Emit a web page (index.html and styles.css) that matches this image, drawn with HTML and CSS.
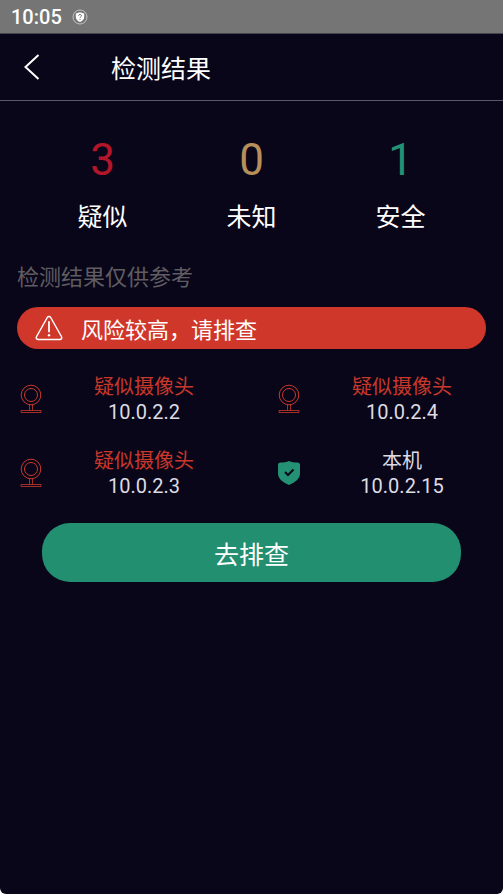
FILE: index.html
```html
<!DOCTYPE html>
<html lang="zh-CN">
<head>
  <meta charset="utf-8">
  <meta name="viewport" content="width=device-width, initial-scale=1">
  <title>检测结果</title>
  <link rel="stylesheet" href="styles.css">
</head>
<body>
  <svg class="sprite" aria-hidden="true">
    <symbol id="camera" viewBox="0 0 28 32">
      <g fill="none" stroke="currentColor">
        <circle cx="14" cy="12" r="9.800"/>
        <circle cx="14" cy="12" r="6.500"/>
        <path d="M12.500 22v5.500M15.500 22v5.500M4 27.500h20v2H4z" stroke-width=".8"/>
      </g>
    </symbol>
  </svg>
  <div class="screen">
    <div class="status">
      <span>10:05</span>
      <svg class="status-icon" viewBox="0 0 16 16" aria-hidden="true">
        <circle cx="8" cy="8" r="7" fill="none" stroke="#c4c4c4"/>
        <path d="M8 3.200l4.200 1.300v3.400c0 2.400-1.800 4-4.200 5.100-2.400-1.100-4.200-2.700-4.200-5.100V4.500z" fill="#fff"/>
        <path d="M6.500 6.700c.2-1.700 3-1.600 3 0 0 1.100-1.400 1.100-1.500 2.300M8 10v1" fill="none" stroke="#757575"/>
      </svg>
    </div>
    <header class="header">
      <button class="back" type="button" aria-label="返回">
        <svg viewBox="0 0 16 28" aria-hidden="true"><path d="M14.500 2L1.500 14l13 12" fill="none" stroke="#fff" stroke-width="2"/></svg>
      </button>
      <h1 class="title">检测结果</h1>
    </header>
    <main>
      <dl class="summary">
        <div class="stat"><dt>疑似</dt><dd class="suspect">3</dd></div>
        <div class="stat"><dt>未知</dt><dd class="unknown">0</dd></div>
        <div class="stat"><dt>安全</dt><dd class="safe">1</dd></div>
      </dl>
      <p class="hint">检测结果仅供参考</p>
      <div class="alert" role="alert">
        <svg class="alert-icon" viewBox="0 0 28 26" aria-hidden="true">
          <path d="M12.300 2.500L1.600 21.500c-.9 1.600 0 2.900 1.700 2.900h21.400c1.700 0 2.600-1.300 1.700-2.900L15.700 2.500c-.8-1.400-2.600-1.400-3.400 0z" fill="none" stroke="#fff" stroke-width="1.500"/>
          <path d="M14 7v9.500" stroke="#fff" stroke-width="1.800" stroke-linecap="round"/>
          <circle cx="14" cy="20.300" r="1.200" fill="#fff"/>
        </svg>
        <span>风险较高，请排查</span>
      </div>
      <ul class="devices">
        <li class="device risk">
          <svg class="device-icon" aria-hidden="true"><use href="#camera"/></svg>
          <div class="device-text"><span class="name">疑似摄像头</span><span class="ip">10.0.2.2</span></div>
        </li>
        <li class="device risk">
          <svg class="device-icon" aria-hidden="true"><use href="#camera"/></svg>
          <div class="device-text"><span class="name">疑似摄像头</span><span class="ip">10.0.2.4</span></div>
        </li>
        <li class="device risk">
          <svg class="device-icon" aria-hidden="true"><use href="#camera"/></svg>
          <div class="device-text"><span class="name">疑似摄像头</span><span class="ip">10.0.2.3</span></div>
        </li>
        <li class="device">
          <svg class="device-icon" viewBox="0 0 28 32" aria-hidden="true">
            <path d="M14 4c2.500 1 5.500 1.600 8.500 1.600 1.700 0 2.500.9 2.500 2.400v8.500c0 5.500-5.500 9.300-11 11.500C8.500 25.800 3 22 3 16.500V8c0-1.500.8-2.400 2.500-2.400C8.500 5.600 11.500 5 14 4z" fill="#249175"/>
            <path d="M10 15l3 3 5.500-5.500" fill="none" stroke="#0a0619" stroke-width="2"/>
          </svg>
          <div class="device-text"><span class="name">本机</span><span class="ip">10.0.2.15</span></div>
        </li>
      </ul>
      <button class="action" type="button">去排查</button>
    </main>
  </div>
</body>
</html>
```
FILE: styles.css
```css
* {
  box-sizing: border-box;
}

html {
  background: #fff;
}

body,
h1,
p,
dl,
dd,
ul {
  margin: 0;
  padding: 0;
}

body,
button {
  font-family: "Noto Sans CJK SC", sans-serif;
}

.status,
.stat dd,
.ip {
  font-family: Roboto, sans-serif;
}

.sprite {
  position: absolute;
  width: 0;
  height: 0;
}

.screen {
  min-height: 100vh;
  background: #0a0619;
  color: #fff;
  border-radius: 0 0 6px 6px;
}

.status {
  display: flex;
  align-items: center;
  gap: 10px;
  height: 34px;
  padding-left: 11px;
  background: #757575;
  border-bottom: 1px solid #46454f;
  font-size: 20px;
  font-weight: 500;
}

.status-icon {
  width: 16px;
  height: 16px;
}

.header {
  display: flex;
  align-items: center;
  height: 67px;
  padding-left: 16px;
  border-bottom: 1px solid #5b5965;
}

.back {
  display: flex;
  align-items: center;
  width: 95px;
  height: 48px;
  padding: 0 8px;
  border: 0;
  background: none;
}

.back svg {
  width: 16px;
  height: 28px;
}

.title {
  font-size: 25px;
  font-weight: 400;
  line-height: 36px;
}

.summary {
  display: grid;
  grid-template-columns: repeat(3, 1fr);
  padding: 32px 28px 0;
}

.stat {
  display: flex;
  flex-direction: column-reverse;
  gap: 10px;
  text-align: center;
}

.stat dt {
  font-size: 25px;
  line-height: 36px;
}

.stat dd {
  font-size: 44px;
  line-height: 54px;
}

.suspect {
  color: #b5152b;
}

.unknown {
  color: #b78f5a;
}

.safe {
  color: #249175;
}

.hint {
  margin: 26px 17px 0;
  color: #5f5d62;
  font-size: 22px;
  line-height: 32px;
}

.alert {
  display: flex;
  align-items: center;
  gap: 18px;
  min-height: 42px;
  margin: 16px 17px 0;
  padding-left: 18px;
  border-radius: 21px;
  background: #d0372b;
  font-size: 22px;
  line-height: 32px;
}

.alert-icon {
  width: 28px;
  height: 26px;
}

.devices {
  display: grid;
  grid-template-columns: 1fr 1fr;
  gap: 20px 32px;
  margin-top: 23px;
  padding: 0 2px 0 17px;
  list-style: none;
}

.device {
  display: flex;
  align-items: center;
}

.device-icon {
  width: 28px;
  height: 32px;
}

.device-text {
  display: flex;
  flex: 1;
  flex-direction: column;
  align-items: center;
  color: #dddbe3;
  font-size: 20px;
  line-height: 27px;
}

.risk .device-icon,
.risk .name {
  color: #c8382b;
}

.action {
  display: block;
  width: calc(100% - 84px);
  min-height: 59px;
  margin: 23px auto 0;
  border: 0;
  border-radius: 28px;
  background: #238f71;
  color: #fff;
  font-size: 25px;
  line-height: 36px;
}
```
